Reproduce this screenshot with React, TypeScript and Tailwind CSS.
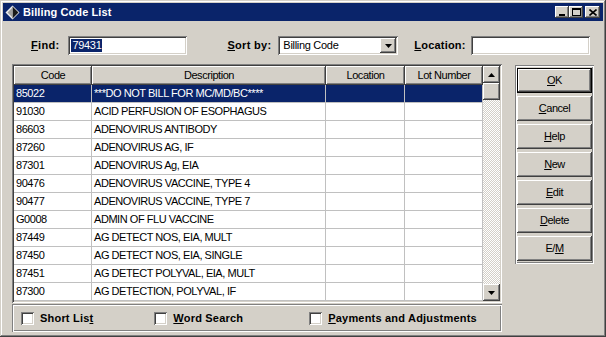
import React from 'react';

const raised =
  'shadow-[inset_-1px_-1px_#404040,inset_1px_1px_#ffffff,inset_-2px_-2px_#808080,inset_2px_2px_#d4d0c8]';
const sunken =
  'shadow-[inset_1px_1px_#808080,inset_-1px_-1px_#ffffff,inset_2px_2px_#404040,inset_-2px_-2px_#d4d0c8]';
const etched =
  'shadow-[inset_1px_1px_#808080,inset_-1px_-1px_#ffffff,inset_2px_2px_#ffffff,inset_-2px_-2px_#808080]';

const rows = [
  ['85022', '***DO NOT BILL FOR MC/MD/BC****'],
  ['91030', 'ACID PERFUSION OF ESOPHAGUS'],
  ['86603', 'ADENOVIRUS ANTIBODY'],
  ['87260', 'ADENOVIRUS AG, IF'],
  ['87301', 'ADENOVIRUS Ag, EIA'],
  ['90476', 'ADENOVIRUS VACCINE, TYPE 4'],
  ['90477', 'ADENOVIRUS VACCINE, TYPE 7'],
  ['G0008', 'ADMIN OF FLU VACCINE'],
  ['87449', 'AG DETECT NOS, EIA, MULT'],
  ['87450', 'AG DETECT NOS, EIA, SINGLE'],
  ['87451', 'AG DETECT POLYVAL, EIA, MULT'],
  ['87300', 'AG DETECTION, POLYVAL, IF'],
];

const buttons: [string, string, string][] = [
  ['', 'O', 'K'],
  ['', 'C', 'ancel'],
  ['', 'H', 'elp'],
  ['', 'N', 'ew'],
  ['', 'E', 'dit'],
  ['', 'D', 'elete'],
  ['E/', 'M', ''],
];

const Arrow = ({ up }: { up?: boolean }) => (
  <svg width="7" height="4" viewBox="0 0 7 4">
    <polygon points={up ? '3.5,0 7,4 0,4' : '0,0 7,0 3.5,4'} fill="#000" />
  </svg>
);

const Check = ({ children }: { children: React.ReactNode }) => (
  <div className="flex items-center">
    <div className={`w-[13px] h-[13px] bg-white ${sunken}`} />
    <span className="ml-[6px] font-bold text-[11px] tracking-[0.2px]">{children}</span>
  </div>
);

export default function App() {
  return (
    <div
      className={`w-[606px] h-[337px] bg-[#d4d0c8] p-[3px] flex flex-col font-['Liberation_Sans',Arial,sans-serif] text-black shadow-[inset_-1px_-1px_#404040,inset_1px_1px_#d4d0c8,inset_-2px_-2px_#808080,inset_2px_2px_#ffffff]`}
    >
      {/* Title bar */}
      <div className="h-[18px] bg-[#0a246a] flex items-center pl-[2px] pr-[3px]">
        <svg width="15" height="15" viewBox="0 0 15 15">
          <polygon points="7.5,0.5 14.5,7.5 7.5,14.5 0.5,7.5" fill="#f0f0f0" />
          <polygon points="7.5,1.5 13.5,7.5 7.5,13.5" fill="#1a1a1a" />
          <polygon points="7.5,2.5 2.5,7.5 7.5,12.5" fill="#a0a0a0" />
        </svg>
        <span className="ml-[3px] text-white font-bold text-[11px] tracking-[0.1px]">Billing Code List</span>
        <div className="ml-auto flex items-center">
          <div className={`w-[14px] h-[12px] bg-[#d4d0c8] flex items-end justify-center pb-[2px] ${raised}`}>
            <div className="w-[6px] h-[2px] bg-black" />
          </div>
          <div className={`w-[14px] h-[12px] bg-[#d4d0c8] flex items-center justify-center ${raised}`}>
            <div className="w-[9px] h-[8px] border border-black border-t-2" />
          </div>
          <div className={`ml-[2px] w-[15px] h-[12px] bg-[#d4d0c8] flex items-center justify-center ${raised}`}>
            <svg width="8" height="7" viewBox="0 0 8 7">
              <path d="M0.5 0.5 L7.5 6.5 M7.5 0.5 L0.5 6.5" stroke="#000" strokeWidth="1.6" />
            </svg>
          </div>
        </div>
      </div>

      {/* Find row */}
      <div className="mt-[15px] h-[19px] flex items-center text-[11px]">
        <span className="ml-[28px] font-bold tracking-[0.3px]">
          <span className="underline">F</span>ind:
        </span>
        <div className={`ml-[9px] w-[119px] h-[19px] bg-white flex items-center px-[3px] ${sunken}`}>
          <span className="bg-[#0a246a] text-white tracking-[-0.3px] leading-[13px] px-px">79431</span>
        </div>
        <span className="ml-[40px] font-bold tracking-[0.3px]">
          <span className="underline">S</span>ort by:
        </span>
        <div className={`ml-[7px] w-[120px] h-[19px] bg-white flex items-center p-[2px] ${sunken}`}>
          <span className="ml-[3px] tracking-[-0.3px]">Billing Code</span>
          <div className={`ml-auto w-[16px] h-[15px] bg-[#d4d0c8] flex items-center justify-center ${raised}`}>
            <Arrow />
          </div>
        </div>
        <span className="ml-[16px] font-bold tracking-[0.2px]">
          <span className="underline">L</span>ocation:
        </span>
        <div className={`ml-[5px] w-[119px] h-[19px] bg-white ${sunken}`} />
      </div>

      {/* Main area */}
      <div className="mt-[9px] flex">
        <div className="ml-[9px] w-[490px] flex flex-col">
          <div className={`h-[239px] bg-white p-[2px] ${sunken}`}>
            <div className="flex h-full">
              <div className="w-[469px] flex flex-col text-[11px] tracking-[-0.45px]">
                <div className="h-[19px] flex">
                  {[
                    ['Code', 'w-[78px]'],
                    ['Description', 'w-[234px]'],
                    ['Location', 'w-[79px]'],
                    ['Lot Number', 'w-[78px]'],
                  ].map(([t, w]) => (
                    <div key={t} className={`${w} h-full bg-[#d4d0c8] flex items-center justify-center ${raised}`}>
                      {t}
                    </div>
                  ))}
                </div>
                {rows.map(([code, desc], i) => {
                  const sel = i === 0;
                  return (
                    <div
                      key={code}
                      className={`h-[18px] flex border-b border-[#c0c0c0] ${sel ? 'bg-[#0a246a] text-white' : ''}`}
                    >
                      <div className="w-[78px] border-r border-[#c0c0c0] pl-[2px] flex items-center">{code}</div>
                      <div className="w-[234px] border-r border-[#c0c0c0] pl-[2px] flex items-center">{desc}</div>
                      <div className="w-[79px] border-r border-[#c0c0c0]" />
                      <div className="w-[78px] border-r border-[#c0c0c0]" />
                    </div>
                  );
                })}
              </div>
              <div className="w-[17px] flex flex-col">
                <div className={`h-[17px] bg-[#d4d0c8] flex items-center justify-center ${raised}`}>
                  <Arrow up />
                </div>
                <div className={`h-[17px] bg-[#d4d0c8] ${raised}`} />
                <div className="flex-1 bg-[repeating-conic-gradient(#ffffff_0_25%,#d4d0c8_0_50%)] bg-[length:2px_2px]" />
                <div className={`h-[17px] bg-[#d4d0c8] flex items-center justify-center ${raised}`}>
                  <Arrow />
                </div>
              </div>
            </div>
          </div>
          <div className={`mt-px h-[28px] flex items-center ${etched}`}>
            <div className="ml-[9px]">
              <Check>
                Short Lis<span className="underline">t</span>
              </Check>
            </div>
            <div className="ml-[61px]">
              <Check>
                <span className="underline">W</span>ord Search
              </Check>
            </div>
            <div className="ml-[66px]">
              <Check>
                <span className="underline">P</span>ayments and Adjustments
              </Check>
            </div>
          </div>
        </div>

        {/* Buttons */}
        <div className={`ml-[13px] mt-px w-[79px] h-[199px] flex flex-col items-center pt-[3px] gap-[3px] ${etched}`}>
          {buttons.map(([pre, u, post], i) => (
            <div
              key={u}
              className={`w-[75px] h-[25px] bg-[#d4d0c8] flex items-center justify-center text-[11px] tracking-[-0.45px] ${
                i === 0
                  ? 'border border-black shadow-[inset_-1px_-1px_#404040,inset_1px_1px_#ffffff,inset_-2px_-2px_#808080]'
                  : raised
              }`}
            >
              {pre}
              <span className="underline">{u}</span>
              {post}
            </div>
          ))}
        </div>
      </div>
    </div>
  );
}
